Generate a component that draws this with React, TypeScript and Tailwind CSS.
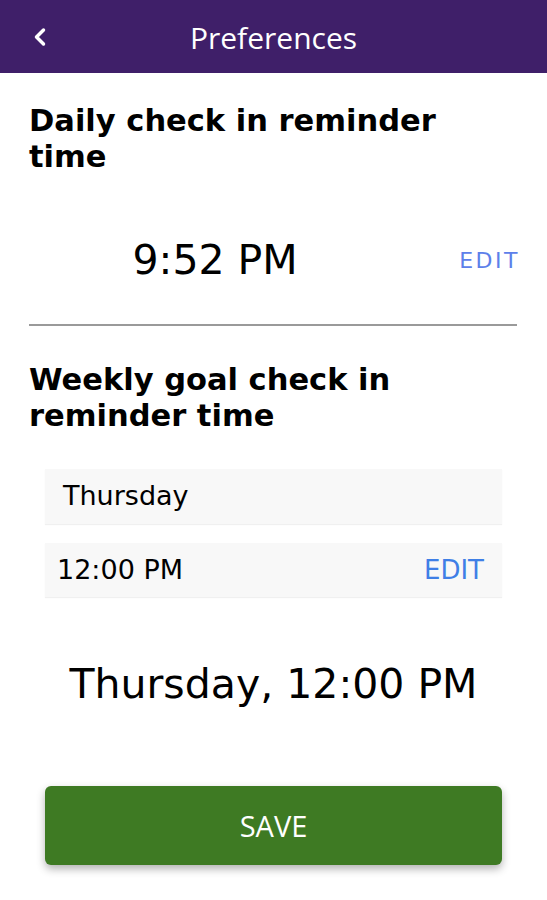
import { ChevronLeft } from "lucide-react"

export default function App() {
  const dejavu = { fontFamily: '"DejaVu Sans", sans-serif' }
  return (
    <div className="w-[547px] h-[900px] bg-white" style={dejavu}>
      {/* header */}
      <div className="h-[73px] bg-[#3f1f69] flex items-center relative">
        <ChevronLeft className="absolute left-[26px] top-[23px] text-white" size={28} strokeWidth={3} />
        <div className="w-full text-center text-white text-[30px] font-['Open_Sans',sans-serif] pt-[1px]">Preferences</div>
      </div>

      <div className="px-[29px]">
        <h2 className="mt-[30px] text-[30.5px] leading-[36px] font-bold text-black">
          Daily check in reminder
          <br />
          time
        </h2>

        <div className="flex items-center pt-[64px] pb-[43px]">
          <div className="flex-1 text-center text-[41px] leading-[42px] text-black pr-[58px]">9:52 PM</div>
          <span className="text-[22px] tracking-[2.5px] text-[#5d80ea] -mr-[2px]">EDIT</span>
        </div>

        <div className="h-[2px] bg-[#9a9a9a] mr-[1px]" />

        <h2 className="mt-[36px] text-[30.5px] leading-[36px] font-bold text-black">
          Weekly goal check in
          <br />
          reminder time
        </h2>

        <div className="mx-[16px] mt-[35px] flex flex-col gap-[19px]">
          <div className="h-[55px] bg-[#f8f8f8] shadow-[0_1px_1px_rgba(0,0,0,0.06)] flex items-center pl-[18px] text-[27px] text-black">
            Thursday
          </div>
          <div className="h-[54px] bg-[#f8f8f8] shadow-[0_1px_1px_rgba(0,0,0,0.06)] flex items-center justify-between pl-[12px] pr-[18px] text-[27px] text-black">
            <span>12:00 PM</span>
            <span className="text-[26px] text-[#3f7fe6]">EDIT</span>
          </div>
        </div>

        <div className="mt-[63px] text-center text-[41px] leading-[48px] text-black">Thursday, 12:00 PM</div>

        <button className="mt-[78px] ml-[16px] w-[457px] h-[79px] rounded-[6px] bg-[#3e7a23] text-white text-[29px] font-['Open_Sans',sans-serif] shadow-[0_4px_8px_rgba(0,0,0,0.3)]">
          SAVE
        </button>
      </div>
    </div>
  )
}
